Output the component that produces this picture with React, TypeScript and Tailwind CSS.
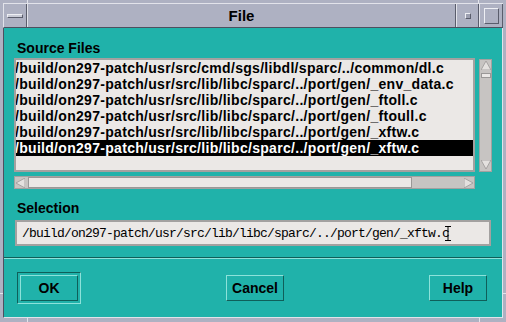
import React from "react";

const rows = [
  "/build/on297-patch/usr/src/cmd/sgs/libdl/sparc/../common/dl.c",
  "/build/on297-patch/usr/src/lib/libc/sparc/../port/gen/_env_data.c",
  "/build/on297-patch/usr/src/lib/libc/sparc/../port/gen/_ftoll.c",
  "/build/on297-patch/usr/src/lib/libc/sparc/../port/gen/_ftoull.c",
  "/build/on297-patch/usr/src/lib/libc/sparc/../port/gen/_xftw.c",
  "/build/on297-patch/usr/src/lib/libc/sparc/../port/gen/_xftw.c",
];

function Arrow({ dir }: { dir: "up" | "down" | "left" | "right" }) {
  const pts =
    dir === "up"
      ? "5,0 10,9 0,9"
      : dir === "down"
      ? "0,0 10,0 5,9"
      : dir === "left"
      ? "0,5 9,0 9,10"
      : "0,0 9,5 0,10";
  const w = dir === "up" || dir === "down" ? 10 : 9;
  const h = dir === "up" || dir === "down" ? 9 : 10;
  return (
    <svg width={w} height={h} viewBox={`0 0 ${w} ${h}`} className="block">
      <polygon points={pts} fill="#e4e1df" stroke="#9a9897" strokeWidth="0.8" />
    </svg>
  );
}

export default function App() {
  const font = { fontFamily: '"Liberation Sans", Arial, sans-serif' };
  return (
    <div
      className="relative w-[506px] h-[322px] bg-[#aeb1c2] flex flex-col pt-[3px] pl-[3px] pr-[3px] pb-[4px] overflow-hidden"
      style={font}
    >
      {/* frame resize markers */}
      <div className="absolute left-[27px] top-0 w-px h-[3px] bg-[#e2e3ea]" />
      <div className="absolute left-[478px] top-0 w-px h-[3px] bg-[#e2e3ea]" />
      <div className="absolute left-[27px] bottom-0 w-px h-[4px] bg-[#e2e3ea]" />
      <div className="absolute left-[479px] bottom-0 w-px h-[4px] bg-[#e2e3ea]" />
      <div className="absolute left-0 top-[293px] w-[3px] h-px bg-[#e2e3ea]" />
      <div className="absolute right-0 top-[293px] w-[3px] h-px bg-[#e2e3ea]" />

      {/* title bar */}
      <div className="h-[25px] flex border-t border-l border-[#e2e3ea] border-b-[#4d5060] border-b">
        <div className="w-[23px] flex items-center justify-center border-r border-[#5a5d6c]">
          <div className="w-[16px] h-[4px] bg-[#c9cbd6] border-t border-l border-[#eeeff4] border-b border-r border-b-[#5a5d6c] border-r-[#5a5d6c]" />
        </div>
        <div className="flex-1 flex items-center justify-center border-l border-[#e2e3ea] border-r-[#5a5d6c] border-r">
          <span className="text-[15px] font-bold text-black leading-none">File</span>
        </div>
        <div className="w-[23px] flex items-center justify-center border-l border-[#e2e3ea] border-r border-r-[#5a5d6c]">
          <div className="w-[4px] h-[4px] bg-[#9c9fb0] border-t border-l border-[#eeeff4] border-b border-r border-b-[#5a5d6c] border-r-[#5a5d6c] box-content" />
        </div>
        <div className="w-[24px] flex items-center justify-center border-l border-[#e2e3ea] border-r border-r-[#5a5d6c]">
          <div className="w-[15px] h-[16px] border border-[#eeeff4] border-b-[#5a5d6c] border-r-[#5a5d6c]" />
        </div>
      </div>

      {/* body */}
      <div className="flex-1 flex flex-col bg-[#20b2aa] border-l border-[#4d5060] border-r border-r-[#e2e3ea] border-b border-b-[#e2e3ea]">
        <div className="px-[10px] pt-[12px] flex flex-col">
          <div className="ml-[3px] h-[16px] leading-[16px] text-[14px] font-bold text-black">
            Source Files
          </div>
          <div className="mt-[2px] flex gap-[4px]">
            <div className="w-[461px] h-[114px] border-2 border-[#a3a1a0] bg-[#ebe8e6] overflow-hidden">
              {rows.map((r, i) => (
                <div
                  key={i}
                  className={
                    "h-[16px] leading-[16px] text-[14px] font-bold whitespace-nowrap tracking-[0.3px] -ml-px " +
                    (i === 5 ? "bg-black text-white" : "text-black")
                  }
                >
                  {r}
                </div>
              ))}
            </div>
            <div className="mt-px w-[13px] h-[113px] bg-[#c7c4c2] border border-[#a3a1a0] flex flex-col items-center pt-px">
              <Arrow dir="up" />
              <div className="mt-[3px] w-[10px] h-[5px] bg-[#ebe8e6] border border-[#9a9897]" />
              <div className="flex-1" />
              <div className="mb-[2px]">
                <Arrow dir="down" />
              </div>
            </div>
          </div>
          <div className="mt-[4px] w-[461px] h-[13px] bg-[#c7c4c2] border border-[#a3a1a0] flex items-center">
            <div className="ml-px">
              <Arrow dir="left" />
            </div>
            <div className="ml-[3px] w-[384px] h-[11px] bg-[#ebe8e6] border border-[#9a9897]" />
            <div className="flex-1" />
            <div className="mr-px">
              <Arrow dir="right" />
            </div>
          </div>
          <div className="mt-[11px] ml-[3px] h-[16px] leading-[16px] text-[14px] font-bold text-black">
            Selection
          </div>
          <div className="mt-[4px] ml-px w-[476px] h-[26px] border-2 border-[#a3a1a0] bg-[#ebe8e6] flex items-center pl-[5px]">
            <span
              className="text-[13px] leading-none text-black whitespace-nowrap tracking-[-0.8px]"
              style={{ fontFamily: '"Liberation Mono", "Courier New", monospace' }}
            >
              /build/on297-patch/usr/src/lib/libc/sparc/../port/gen/_xftw.c
            </span>
            <svg width="6" height="15" viewBox="0 0 6 15" className="-ml-[4px] block">
              <path d="M0 0.5H6M3 0.5V14.5M0 14.5H6" stroke="#000" strokeWidth="1" fill="none" />
            </svg>
          </div>
        </div>

        <div className="mt-[11px] h-px bg-[#0f5f59]" />
        <div className="h-px bg-[#8ce2da]" />

        <div className="mt-[13px] flex items-start justify-between pl-[13px] pr-[15px]">
          <div className="p-[2px] border border-[#0f5f59] border-r-[#8ce2da] border-b-[#8ce2da]">
            <button className="w-[58px] h-[26px] border border-[#8ce2da] border-r-[#0f5f59] border-b-[#0f5f59] text-[14px] font-bold text-black bg-transparent flex items-center justify-center">
              OK
            </button>
          </div>
          <button className="mt-[3px] w-[58px] h-[26px] border border-[#8ce2da] border-r-[#0f5f59] border-b-[#0f5f59] text-[14px] font-bold text-black bg-transparent flex items-center justify-center">
            Cancel
          </button>
          <button className="mt-[3px] w-[58px] h-[26px] border border-[#8ce2da] border-r-[#0f5f59] border-b-[#0f5f59] text-[14px] font-bold text-black bg-transparent flex items-center justify-center">
            Help
          </button>
        </div>
      </div>
    </div>
  );
}
